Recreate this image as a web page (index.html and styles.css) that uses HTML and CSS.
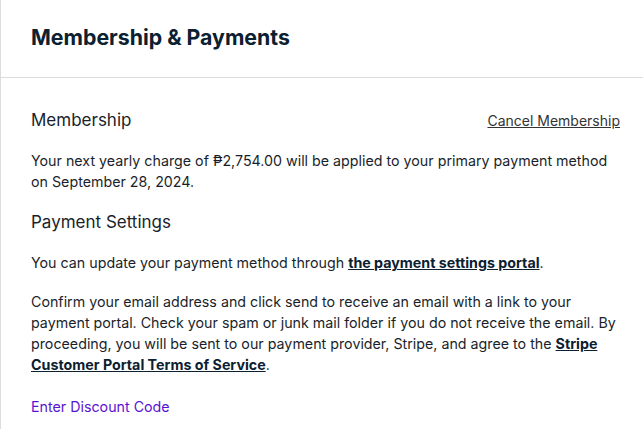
FILE: index.html
```html
<!DOCTYPE html>
<html lang="en">
<head>
  <meta charset="UTF-8">
  <meta name="viewport" content="width=device-width, initial-scale=1">
  <title>Membership &amp; Payments</title>
  <link rel="stylesheet" href="styles.css">
</head>
<body>

<div class="panel">
  <header class="panel-head">
    <h1>Membership &amp; Payments</h1>
  </header>

  <section class="panel-body">
    <div class="row">
      <h2>Membership</h2>
      <a href="#" class="cancel">Cancel Membership</a>
    </div>
    <p>Your next yearly charge of &#8369;2,754.00 will be applied to your primary payment method on September 28, 2024.</p>

    <h2>Payment Settings</h2>
    <p>You can update your payment method through <a href="#" class="strong-link">the payment settings portal</a>.</p>
    <p>Confirm your email address and click send to receive an email with a link to your payment portal. Check your spam or junk mail folder if you do not receive the email. By proceeding, you will be sent to our payment provider, Stripe, and agree to the <a href="#" class="strong-link">Stripe Customer Portal Terms of Service</a>.</p>

    <div class="discount-row">
      <a href="#" class="discount">Enter Discount Code</a>
    </div>
  </section>
</div>

</body>
</html>
```

FILE: styles.css
```css
body {
  font-family: Inter, "Liberation Sans", sans-serif;
  margin: 0;
  padding: 0;
  color: #1a1f2b;
  background: #fff;
}
.panel {
  border-left: 1px solid #dcdcdc;
  min-height: 429px;
}
.panel-head {
  height: 78px;
  box-sizing: border-box;
  border-bottom: 1px solid #dcdcdc;
  padding: 24px 30px 0;
}
h1 {
  margin: 0;
  font-size: 21.3px;
  line-height: 26px;
  font-weight: 700;
  color: #0b2030;
}
.panel-body {
  padding: 30px 23px 0 30px;
}
.row {
  display: flex;
  justify-content: space-between;
  align-items: baseline;
}
h2 {
  margin: 0 0 18px;
  font-size: 17px;
  line-height: 24px;
  font-weight: 400;
}
.cancel {
  color: #333;
  font-size: 14px;
}
p {
  max-width: 590px;
  margin: 0 0 18px;
  font-size: 14.25px;
  line-height: 21px;
}
.strong-link {
  color: #0b2030;
  font-weight: 700;
}
.discount-row {
  margin-top: 21px;
  font-size: 14.25px;
  line-height: 21px;
}
.discount {
  color: #5a13d1;
  text-decoration: none;
}
```
